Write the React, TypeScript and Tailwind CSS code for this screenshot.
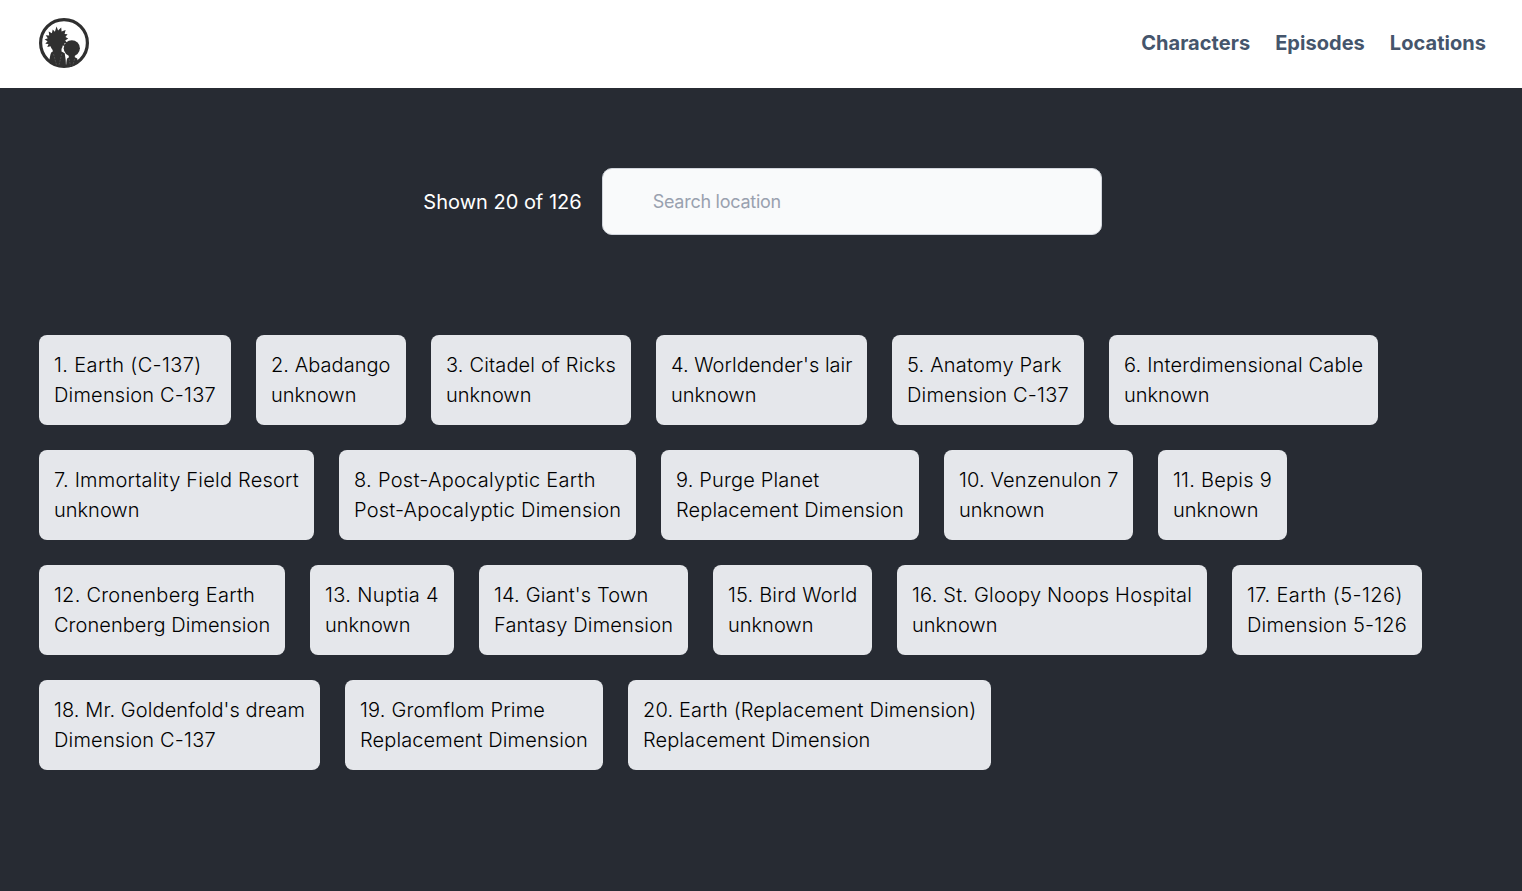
import React from "react";

type Location = { name: string; dimension: string; width: string; nameTracking: string; dimensionTracking: string };

const locations: Location[] = [
  { name: "Earth (C-137)", dimension: "Dimension C-137", width: "w-[192px]", nameTracking: "tracking-[0.38px]", dimensionTracking: "tracking-[0.2px]" },
  { name: "Abadango", dimension: "unknown", width: "w-[150px]", nameTracking: "tracking-[0.05px]", dimensionTracking: "tracking-normal" },
  { name: "Citadel of Ricks", dimension: "unknown", width: "w-[200px]", nameTracking: "tracking-[0.16px]", dimensionTracking: "tracking-normal" },
  { name: "Worldender's lair", dimension: "unknown", width: "w-[211px]", nameTracking: "tracking-[0.03px]", dimensionTracking: "tracking-normal" },
  { name: "Anatomy Park", dimension: "Dimension C-137", width: "w-[192px]", nameTracking: "tracking-[0.2px]", dimensionTracking: "tracking-[0.2px]" },
  { name: "Interdimensional Cable", dimension: "unknown", width: "w-[269px]", nameTracking: "tracking-[0.16px]", dimensionTracking: "tracking-normal" },
  { name: "Immortality Field Resort", dimension: "unknown", width: "w-[275px]", nameTracking: "tracking-[0.22px]", dimensionTracking: "tracking-normal" },
  { name: "Post-Apocalyptic Earth", dimension: "Post-Apocalyptic Dimension", width: "w-[297px]", nameTracking: "tracking-[0.28px]", dimensionTracking: "tracking-[0.2px]" },
  { name: "Purge Planet", dimension: "Replacement Dimension", width: "w-[258px]", nameTracking: "tracking-[0.17px]", dimensionTracking: "tracking-[0.12px]" },
  { name: "Venzenulon 7", dimension: "unknown", width: "w-[189px]", nameTracking: "tracking-[0.13px]", dimensionTracking: "tracking-normal" },
  { name: "Bepis 9", dimension: "unknown", width: "w-[129px]", nameTracking: "tracking-[0.24px]", dimensionTracking: "tracking-normal" },
  { name: "Cronenberg Earth", dimension: "Cronenberg Dimension", width: "w-[246px]", nameTracking: "tracking-[0.25px]", dimensionTracking: "tracking-[0.06px]" },
  { name: "Nuptia 4", dimension: "unknown", width: "w-[144px]", nameTracking: "tracking-[0.36px]", dimensionTracking: "tracking-normal" },
  { name: "Giant's Town", dimension: "Fantasy Dimension", width: "w-[209px]", nameTracking: "tracking-[0.16px]", dimensionTracking: "tracking-[0.14px]" },
  { name: "Bird World", dimension: "unknown", width: "w-[159px]", nameTracking: "tracking-[0.18px]", dimensionTracking: "tracking-normal" },
  { name: "St. Gloopy Noops Hospital", dimension: "unknown", width: "w-[310px]", nameTracking: "tracking-[0.2px]", dimensionTracking: "tracking-normal" },
  { name: "Earth (5-126)", dimension: "Dimension 5-126", width: "w-[190px]", nameTracking: "tracking-[0.42px]", dimensionTracking: "tracking-[0.18px]" },
  { name: "Mr. Goldenfold's dream", dimension: "Dimension C-137", width: "w-[281px]", nameTracking: "tracking-[0.09px]", dimensionTracking: "tracking-[0.2px]" },
  { name: "Gromflom Prime", dimension: "Replacement Dimension", width: "w-[258px]", nameTracking: "tracking-[0.18px]", dimensionTracking: "tracking-[0.12px]" },
  { name: "Earth (Replacement Dimension)", dimension: "Replacement Dimension", width: "w-[363px]", nameTracking: "tracking-[0.15px]", dimensionTracking: "tracking-[0.1px]" },
];

function Logo() {
  return (
    <svg viewBox="0 0 50 50" className="h-[50px] w-[50px]">
      <circle cx="25" cy="25" r="23.4" fill="#fff" stroke="#303030" strokeWidth="3.2" />
      <g fill="#303030">
        <path d="M17.5 8.6l1.6 3.8 3.1-2.9.4 4 4-1.5-1 4 3 .2-2.2 2.8 2.8 1.6-3 1.8 2 2.6-2.9.3.7 2.7-2.3-.4c-.3 3.2-2.2 5.3-5.9 5.3-3.5 0-5.4-1.6-6.3-4.7l-3.2.8 1.2-3-3.2-.3 2.3-2.4-3-1.8 3.2-1.3-2.1-3 3.5.3-.5-4 3.2 1.7.8-3.7 2.2 2.2z" />
        <path d="M13.5 30.5h9v3l3.2 1.8 1 6.7.3 6.5L17 48l-6.8-4.5c.6-3.8 1-6.7 2-9l1.6-1z" />
        <circle cx="32.8" cy="30.3" r="8.1" />
        <path d="M29.8 36h6v3.2l2.4 1.2.9 4.8L32 49h-4.8c0-3.4.2-5.8.9-8.4l1.7-1z" />
      </g>
      <path d="M14.5 36l3 11M22.7 36l-2.7 11M30 41l1.5 6.5M35.6 41l-1.8 6.5" fill="none" stroke="#fff" strokeOpacity=".25" strokeWidth=".6" strokeDasharray="2 1" />
    </svg>
  );
}

export default function App() {
  return (
    <div className="min-h-screen bg-[#272b33] font-['Inter',sans-serif] text-xl leading-[30px] text-black">
      <header className="flex h-[88px] items-center justify-between bg-white pb-0.5 pl-[39px] pr-9">
        <a href="#" aria-label="Home"><Logo /></a>
        <nav className="flex gap-[25px] font-bold tracking-[0.04px] text-slate-600">
          <a href="#">Characters</a>
          <a href="#">Episodes</a>
          <a href="#">Locations</a>
        </nav>
      </header>
      <main>
        <div className="flex items-center justify-center gap-5 pl-[3px] pt-20">
          <p className="text-white">Shown 20 of 126</p>
          <input
            type="text"
            placeholder="Search location"
            className="h-[67px] w-[500px] rounded-[10px] border border-gray-300 bg-gray-50 pl-[50px] text-lg tracking-[-0.26px] placeholder:text-gray-400"
          />
        </div>
        <ul className="flex flex-wrap gap-[25px] px-[39px] pt-[100px]">
          {locations.map(({ name, dimension, width, nameTracking, dimensionTracking }, i) => (
            <li key={name} className={`whitespace-nowrap rounded-lg bg-gray-200 p-[15px] font-light ${width}`}>
              <p className={nameTracking}>{i + 1}. {name}</p>
              <p className={dimensionTracking}>{dimension}</p>
            </li>
          ))}
        </ul>
      </main>
    </div>
  );
}
